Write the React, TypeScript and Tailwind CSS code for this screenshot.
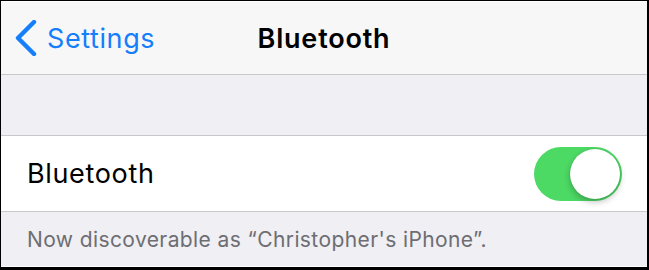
export default function App() {
  return (
    <div
      className="flex h-[270px] w-[649px] flex-col border-t border-l border-r-2 border-b-[3px] border-black bg-white"
      style={{ fontFamily: "Inter, 'Noto Sans', sans-serif" }}
    >
      {/* nav bar */}
      <div className="relative flex h-[74px] shrink-0 items-center border-t border-b border-t-white border-b-[#c8c7cc] bg-[#f7f7f8]">
        <div className="flex items-center pl-[13px] text-[#157efb]">
          <svg width="24" height="36" viewBox="0 0 24 36" fill="none">
            <path d="M20 2 L4 18 L20 34" stroke="currentColor" strokeWidth="4.4" strokeLinecap="round" strokeLinejoin="round" />
          </svg>
          <span className="ml-[9px] text-[27px] leading-none tracking-[0.6px]">Settings</span>
        </div>
        <div className="absolute inset-0 flex items-center justify-center">
          <span className="text-[27px] font-semibold leading-none tracking-[0.8px] text-black">Bluetooth</span>
        </div>
      </div>

      {/* spacer */}
      <div className="h-[61px] shrink-0 border-b border-[#c8c7cc] bg-[#efeff4]" />

      {/* bluetooth row */}
      <div className="flex h-[76px] shrink-0 items-center justify-between border-b border-[#c8c7cc] bg-white pl-[26px] pr-[25px]">
        <span className="text-[27px] leading-none tracking-[0.65px] text-black">Bluetooth</span>
        <div className="flex h-[54px] w-[88px] items-center justify-end rounded-full bg-[#4cd964] p-[2px]">
          <div className="h-[50px] w-[50px] rounded-full bg-white shadow-[0_3px_6px_rgba(0,0,0,0.25),0_0_1px_rgba(0,0,0,0.2)]" />
        </div>
      </div>

      {/* footer */}
      <div className="flex h-[55px] shrink-0 items-center border-b border-white bg-[#efeff4] pl-[26px]">
        <span className="text-[21px] leading-none tracking-[0.4px] text-[#6d6d72]">
          Now discoverable as “Christopher's iPhone”.
        </span>
      </div>
    </div>
  );
}
